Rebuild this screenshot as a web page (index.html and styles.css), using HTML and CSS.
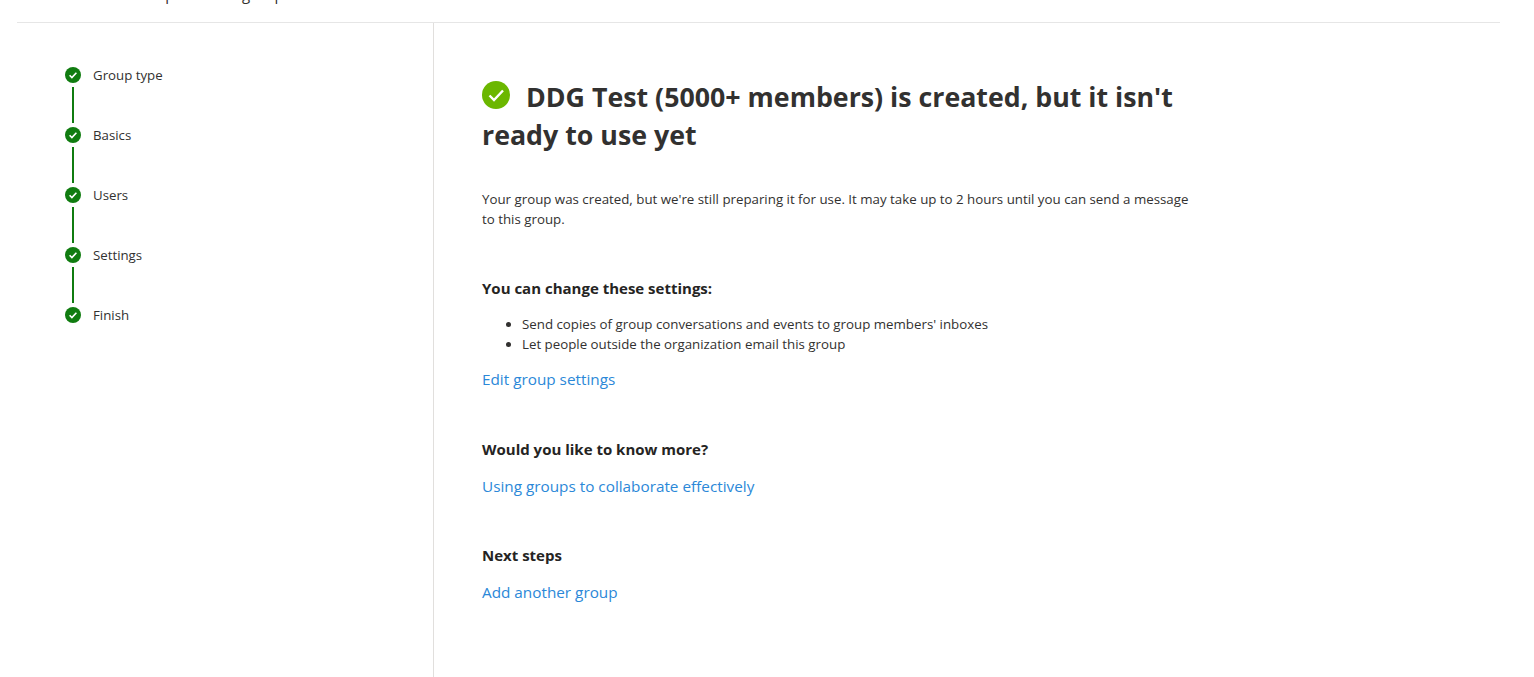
FILE: index.html
```html
<!DOCTYPE html>
<html lang="en">
<head>
<meta charset="utf-8">
<title>Add a group</title>
<link rel="stylesheet" href="styles.css">
</head>
<body>
<div class="page">
  <div class="crumbs"><span class="crumb-text">Groups &gt; Add a group &gt;</span></div>
  <div class="wizard">
    <nav class="steps">
      <div class="step"><svg class="dot" viewBox="0 0 16 16"><circle cx="8" cy="8" r="8" fill="#107c10"/><path d="M4.6 8.3l2.3 2.3 4.5-4.8" fill="none" stroke="#fff" stroke-width="1.6"/></svg><span>Group type</span></div>
      <div class="line"></div>
      <div class="step"><svg class="dot" viewBox="0 0 16 16"><circle cx="8" cy="8" r="8" fill="#107c10"/><path d="M4.6 8.3l2.3 2.3 4.5-4.8" fill="none" stroke="#fff" stroke-width="1.6"/></svg><span>Basics</span></div>
      <div class="line"></div>
      <div class="step"><svg class="dot" viewBox="0 0 16 16"><circle cx="8" cy="8" r="8" fill="#107c10"/><path d="M4.6 8.3l2.3 2.3 4.5-4.8" fill="none" stroke="#fff" stroke-width="1.6"/></svg><span>Users</span></div>
      <div class="line"></div>
      <div class="step"><svg class="dot" viewBox="0 0 16 16"><circle cx="8" cy="8" r="8" fill="#107c10"/><path d="M4.6 8.3l2.3 2.3 4.5-4.8" fill="none" stroke="#fff" stroke-width="1.6"/></svg><span>Settings</span></div>
      <div class="line"></div>
      <div class="step"><svg class="dot" viewBox="0 0 16 16"><circle cx="8" cy="8" r="8" fill="#107c10"/><path d="M4.6 8.3l2.3 2.3 4.5-4.8" fill="none" stroke="#fff" stroke-width="1.6"/></svg><span>Finish</span></div>
    </nav>
    <main class="content">
      <h1 class="title"><svg class="title-icon" viewBox="0 0 28 28"><circle cx="14" cy="14" r="14" fill="#6bb700"/><path d="M7.5 14.5l4.5 4.5 9-9.5" fill="none" stroke="#fff" stroke-width="2.4"/></svg>DDG Test (5000+ members) is created, but it isn't ready to use yet</h1>
      <p class="intro">Your group was created, but we're still preparing it for use. It may take up to 2 hours until you can send a message to this group.</p>
      <h2 class="head first">You can change these settings:</h2>
      <ul class="list">
        <li>Send copies of group conversations and events to group members' inboxes</li>
        <li>Let people outside the organization email this group</li>
      </ul>
      <a class="link link-tight" href="#">Edit group settings</a>
      <h2 class="head second">Would you like to know more?</h2>
      <a class="link" href="#">Using groups to collaborate effectively</a>
      <h2 class="head third">Next steps</h2>
      <a class="link" href="#">Add another group</a>
    </main>
  </div>
</div>
</body>
</html>
```
FILE: styles.css
```css
html, body { margin: 0; padding: 0; height: 100%; overflow: hidden; background: #fff; }
body { font-family: "Open Sans", "Noto Sans", "Liberation Sans", sans-serif; color: #323130; }
.page { height: 677px; display: flex; flex-direction: column; padding: 0 34px 0 17px; box-sizing: border-box; }
.crumbs { height: 22px; border-bottom: 1px solid #e6e6e6; flex: none; overflow: hidden; }
.crumb-text { display: block; margin: -16px 0 0 113px; font-size: 15px; line-height: 20px; color: #323130; }
.wizard { display: flex; flex: 1; min-height: 0; }
.steps { width: 417px; flex: none; border-right: 1px solid #e1dfdd; padding: 44px 0 0 48px; box-sizing: border-box; }
.step { display: flex; align-items: center; gap: 12px; height: 16px; font-size: 13.25px; color: #323130; }
.dot { width: 16px; height: 16px; flex: none; }
.line { width: 2px; height: 36px; margin: 4px 0 4px 7px; background: #107c10; }
.content { padding: 55px 0 0 48px; width: 712px; box-sizing: content-box; }
.title { margin: 0; font-size: 26.75px; line-height: 38px; font-weight: 700; color: #323130; }
.title-icon { width: 28px; height: 28px; margin-right: 16px; vertical-align: -2px; }
.intro { margin: 35px 0 0; font-size: 13.3px; line-height: 20px; }
.head { margin: 0; font-size: 15px; line-height: 20px; font-weight: 700; color: #252423; }
.first { margin-top: 49px; }
.second { margin-top: 50px; }
.third { margin-top: 49px; }
.list { margin: 16px 0 0; padding: 0 0 0 40px; font-size: 13.3px; line-height: 20px; }
.link { display: block; margin-top: 17px; font-size: 15.3px; line-height: 20px; color: #2b88d8; text-decoration: none; }
.link-tight { margin-top: 15px; }
```
